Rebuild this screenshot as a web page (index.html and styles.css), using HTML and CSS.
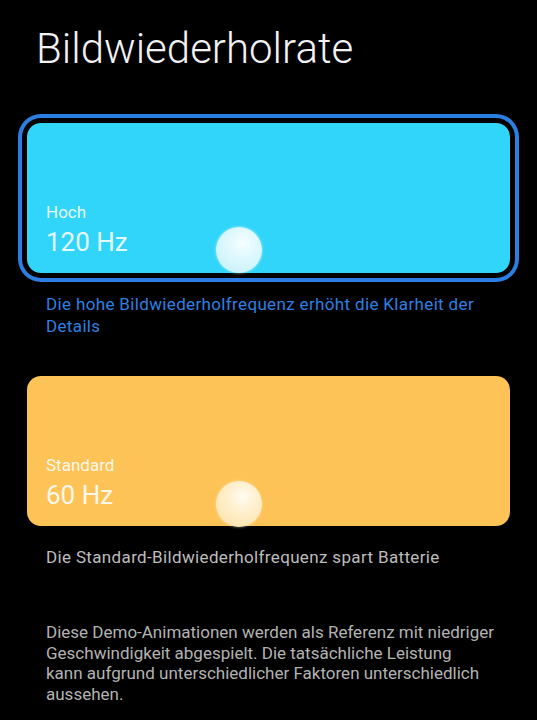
FILE: index.html
```html
<!DOCTYPE html>
<html lang="de">
<head>
<meta charset="utf-8">
<title>Bildwiederholrate</title>
<link rel="stylesheet" href="styles.css">
</head>
<body>
<main class="page">
  <h1 class="title">Bildwiederholrate</h1>

  <section class="option">
    <div class="card card-high selected">
      <div class="label">Hoch</div>
      <div class="value">120 Hz</div>
      <span class="ball ball-high"></span>
    </div>
    <p class="desc desc-active">Die hohe Bildwiederholfrequenz erhöht die Klarheit der<br>Details</p>
  </section>

  <section class="option option-second">
    <div class="card card-std">
      <div class="label">Standard</div>
      <div class="value">60 Hz</div>
      <span class="ball ball-std"></span>
    </div>
    <p class="desc">Die Standard-Bildwiederholfrequenz spart Batterie</p>
  </section>

  <p class="note">Diese Demo-Animationen werden als Referenz mit niedriger<br>Geschwindigkeit abgespielt. Die tatsächliche Leistung<br>kann aufgrund unterschiedlicher Faktoren unterschiedlich<br>aussehen.</p>
</main>
</body>
</html>
```

FILE: styles.css
```css
html, body {
  margin: 0;
  padding: 0;
  background: #000;
}

body {
  font-family: Roboto, "Noto Sans", "Liberation Sans", sans-serif;
  color: #f0f0f0;
  width: 537px;
  height: 720px;
  overflow: hidden;
}

.page {
  display: flex;
  flex-direction: column;
}

.title {
  margin: 24px 0 0 36px;
  font-size: 42px;
  line-height: 50px;
  font-weight: 300;
  color: #f2f2f2;
}

.option {
  margin-top: 49px;
  display: flex;
  flex-direction: column;
}

.option-second {
  margin-top: 39px;
}

.card {
  position: relative;
  margin: 0 27px;
  height: 150px;
  box-sizing: border-box;
  border-radius: 14px;
  padding: 0 19px 16px;
  display: flex;
  flex-direction: column;
  justify-content: flex-end;
  color: rgba(255, 255, 255, 0.9);
}

.card-high {
  background: #31d5fa;
}

.card-std {
  background: #fdc357;
}

.selected {
  box-shadow: 0 0 0 5px #000, 0 0 0 9px #2b7fe3;
}

.label {
  font-size: 17px;
  line-height: 22px;
  margin-bottom: 4px;
}

.value {
  font-size: 26px;
  line-height: 30px;
}

.ball {
  position: absolute;
  left: 189px;
  bottom: 0;
  width: 46px;
  height: 46px;
  border-radius: 50%;
}

.ball-high {
  background: radial-gradient(circle at 58% 35%, #f6feff 0%, #e0f9fe 35%, #cdf3fb 75%, #bdeef9 100%);
  box-shadow: 0 0 3px rgba(230, 252, 255, 0.7);
}

.ball-std {
  bottom: -1px;
  background: radial-gradient(circle at 58% 35%, #fffcf3 0%, #fff0cf 35%, #fde6b3 75%, #fbdc9c 100%);
  box-shadow: 0 0 3px rgba(255, 240, 210, 0.6);
}

.desc {
  margin: 20px 20px 0 46px;
  font-size: 17px;
  line-height: 22px;
  letter-spacing: 0.35px;
  color: #bdbdbd;
  white-space: nowrap;
}

.desc-active {
  color: #2e80e2;
}

.note {
  margin: 54px 20px 0 46px;
  font-size: 17px;
  line-height: 20.5px;
  color: #b3b3b3;
  white-space: nowrap;
}
```
